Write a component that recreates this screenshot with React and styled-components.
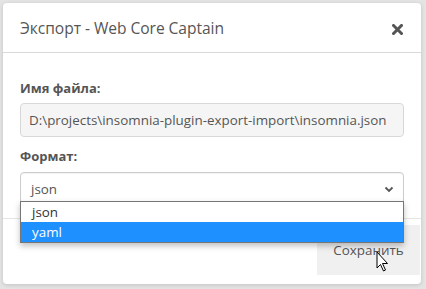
import React from "react";
import styled, { createGlobalStyle } from "styled-components";

const Global = createGlobalStyle`
  html, body { margin: 0; padding: 0; }
  body {
    background: #e4e4e4;
    font-family: "Open Sans", "Noto Sans", sans-serif;
    width: 426px;
    height: 289px;
    overflow: hidden;
  }
`;

const Page = styled.div`
  padding: 3px 5px 0 3px;
  position: relative;
`;

const Modal = styled.div`
  background: #fff;
  border-radius: 4px;
  box-shadow: 0 1px 4px rgba(0, 0, 0, 0.15);
  height: 281px;
  display: flex;
  flex-direction: column;
  position: relative;
`;

const Header = styled.div`
  height: 50px;
  display: flex;
  align-items: center;
  justify-content: space-between;
  padding: 0 18px 0 17px;
  border-bottom: 1px solid #d9d9d9;
  box-sizing: border-box;
`;

const Title = styled.div`
  font-size: 15.6px;
  color: #555;
  letter-spacing: -0.05px;
`;

const Close = styled.div`
  color: #555;
  display: flex;
  margin-top: 4px;
`;

const Body = styled.div`
  padding: 26px 17px 0 17px;
  display: flex;
  flex-direction: column;
`;

const Label = styled.div`
  font-size: 13px;
  font-weight: 700;
  color: #555;
  line-height: 18px;
  margin-bottom: ${(p) => p.$mb || 5}px;
`;

const Input = styled.div`
  height: 34px;
  box-sizing: border-box;
  border: 1px solid #d8d8d8;
  border-radius: 4px;
  background: #f5f5f5;
  display: flex;
  align-items: center;
  padding: 0 8px;
  font-size: 13.4px;
  color: #555;
  white-space: nowrap;
  margin-bottom: 10px;
`;

const Select = styled.div`
  height: 34px;
  box-sizing: border-box;
  border: 1px solid #ccc;
  border-radius: 4px;
  background: #fff;
  display: flex;
  align-items: center;
  justify-content: space-between;
  padding: 0 9px 0 10px;
  font-size: 13.4px;
  color: #555;
  box-shadow: inset 0 1px 1px rgba(0,0,0,0.05);
`;

const Dropdown = styled.div`
  position: absolute;
  left: 17px;
  right: 17px;
  top: 198px;
  border: 1px solid #767676;
  background: #fff;
  box-shadow: 0 3px 6px rgba(0, 0, 0, 0.25);
  z-index: 2;
`;

const Option = styled.div`
  height: 20px;
  display: flex;
  align-items: center;
  padding: 0 11px;
  font-size: 13.4px;
  color: ${(p) => (p.$active ? "#fff" : "#333")};
  background: ${(p) => (p.$active ? "#1e90ff" : "#fff")};
`;

const Footer = styled.div`
  margin-top: auto;
  height: 66px;
  border-top: 1px solid #e5e5e5;
  display: flex;
  justify-content: flex-end;
  align-items: flex-start;
  padding: 6px 1px 0 0;
  box-sizing: border-box;
`;

const Button = styled.div`
  width: 103px;
  height: 50px;
  background: #f0f0f0;
  color: #555;
  font-size: 13.4px;
  display: flex;
  align-items: center;
  justify-content: center;
`;

const Cursor = styled.svg`
  position: absolute;
  left: 376px;
  top: 251px;
  z-index: 3;
`;

export default function App() {
  return (
    <Page>
      <Global />
      <Modal>
        <Header>
          <Title>Экспорт - Web Core Captain</Title>
          <Close>
            <svg width="11" height="11" viewBox="0 0 11 11">
              <path d="M1.5 1.5 L9.5 9.5 M9.5 1.5 L1.5 9.5" stroke="#555" strokeWidth="3" strokeLinecap="square" />
            </svg>
          </Close>
        </Header>
        <Body>
          <Label $mb={6}>Имя файла:</Label>
          <Input>D:\projects\insomnia-plugin-export-import\insomnia.json</Input>
          <Label $mb={7}>Формат:</Label>
          <Select>
            <span>json</span>
            <svg width="10" height="7" viewBox="0 0 10 7">
              <path d="M1.5 1.5 L5 5 L8.5 1.5" fill="none" stroke="#555" strokeWidth="1.8" />
            </svg>
          </Select>
        </Body>
        <Footer>
          <Button>Сохранить</Button>
        </Footer>
        <Dropdown>
          <Option>json</Option>
          <Option $active>yaml</Option>
        </Dropdown>
      </Modal>
      <Cursor width="13" height="21" viewBox="0 0 13 21">
        <path d="M1 1 L1 17 L4.5 13.5 L7.5 20 L9.5 19 L6.5 12.5 L11.5 12.5 Z" fill="#fff" stroke="#000" strokeWidth="1" strokeLinejoin="miter" />
      </Cursor>
    </Page>
  );
}
